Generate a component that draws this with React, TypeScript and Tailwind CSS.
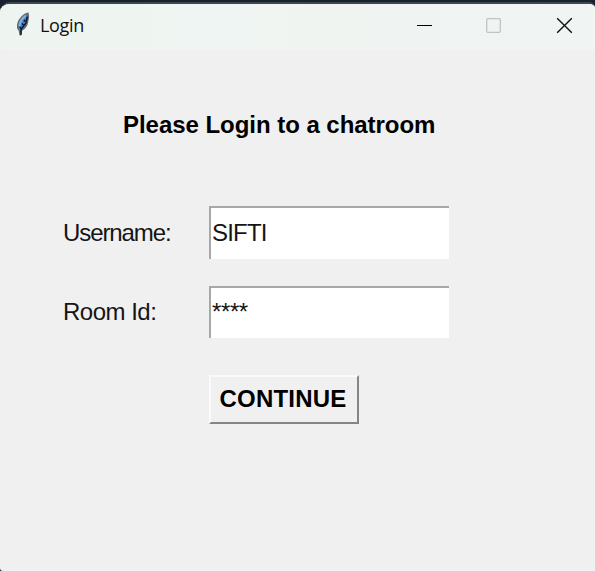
function Feather() {
  return (
    <svg width="16" height="25" viewBox="0 0 16 25" className="ml-[15px] shrink-0">
      <path d="M12.9 1.3C9 2.2 4.4 6.5 3 11.5C2.3 14 2.5 16.5 4.4 18.6L5.3 23.3L6.5 18.4C9.5 16.8 12 13.5 12.6 9.5C13.1 6.5 14.1 3.8 12.9 1.3Z" fill="#3f80c8" stroke="#666c6e" strokeWidth="1.5" />
      <path d="M11 3.6C7.4 6 5 9.5 4.3 14" fill="none" stroke="#80b2e6" strokeWidth="2" />
      <path d="M12.3 4.5L11 11L6 17.5V23M9 8l1 1.5M7 11.5l1.5 1.5M4.6 15l2 1.5" fill="none" stroke="#0c1420" strokeWidth="1.4" />
    </svg>
  );
}

function TitleBar() {
  return (
    <header className="flex h-[46px] shrink-0 items-start bg-gradient-to-r from-[#eef5f0] to-[#f0f4f3]">
      <div className="flex pt-[8px]">
        <Feather />
        <span className="ml-[9px] mt-px font-['Open_Sans','Noto_Sans',sans-serif] text-[18px] leading-[24px] tracking-[-0.3px] text-[#111]">Login</span>
      </div>
      <div className="ml-auto mr-[22px] flex pt-[13px]">
        <svg width="17" height="17" viewBox="0 0 17 17" className="mr-[52px]"><path d="M1 8.5h15" stroke="#000" /></svg>
        <svg width="17" height="17" viewBox="0 0 17 17" className="mr-[54px]"><rect x="1.7" y="1.7" width="13.6" height="13.6" rx="1" fill="none" stroke="#bfc3c1" strokeWidth="1.3" /></svg>
        <svg width="17" height="17" viewBox="0 0 17 17"><path d="M1.2 1.2l14.6 14.6M15.8 1.2L1.2 15.8" stroke="#111" strokeWidth="1.4" /></svg>
      </div>
    </header>
  );
}

export default function App() {
  return (
    <div className="h-[571px] w-[595px] overflow-hidden border-t-2 border-[#182131] bg-[#182131]">
      <div className="flex h-[569px] flex-col overflow-hidden rounded-bl-[3px] rounded-tl-[10px] rounded-tr-[6px] border-t-2 border-[#3f474e] bg-[#f0f0f0] font-['Liberation_Sans',Arial,sans-serif] text-[24px] leading-[27px] text-[#151515]">
        <TitleBar />
        <main className="flex flex-col items-start">
          <h1 className="ml-[123px] mt-[61px] whitespace-nowrap font-bold tracking-[-0.04px] text-black">Please Login to a chatroom</h1>
          <form className="mt-[68px] grid grid-cols-[146px_240px] gap-y-[27px] pl-[63px]" onSubmit={(e) => e.preventDefault()}>
            <label htmlFor="user" className="pt-[13px] tracking-[-1.1px]">Username:</label>
            <input id="user" defaultValue="SIFTI" className="h-[53px] w-[240px] border-l-2 border-t-2 border-[#a8a8a8] bg-white pb-[1px] pl-px tracking-[-0.8px] outline-none" />
            <label htmlFor="room" className="pt-[12px] tracking-[-0.5px]">Room Id:</label>
            <input id="room" defaultValue="****" className="h-[52px] w-[240px] border-l-2 border-t-2 border-[#a8a8a8] bg-white pb-[2px] pl-px tracking-[-0.4px] outline-none" />
            <button className="col-start-2 mt-[10px] h-[49px] w-[150px] border-2 border-b-[#858585] border-l-[#fafafa] border-r-[#858585] border-t-[#fafafa] bg-[#f0f0f0] pb-[3px] pr-[2px] text-center font-bold tracking-[0.2px] text-black">CONTINUE</button>
          </form>
        </main>
      </div>
    </div>
  );
}
